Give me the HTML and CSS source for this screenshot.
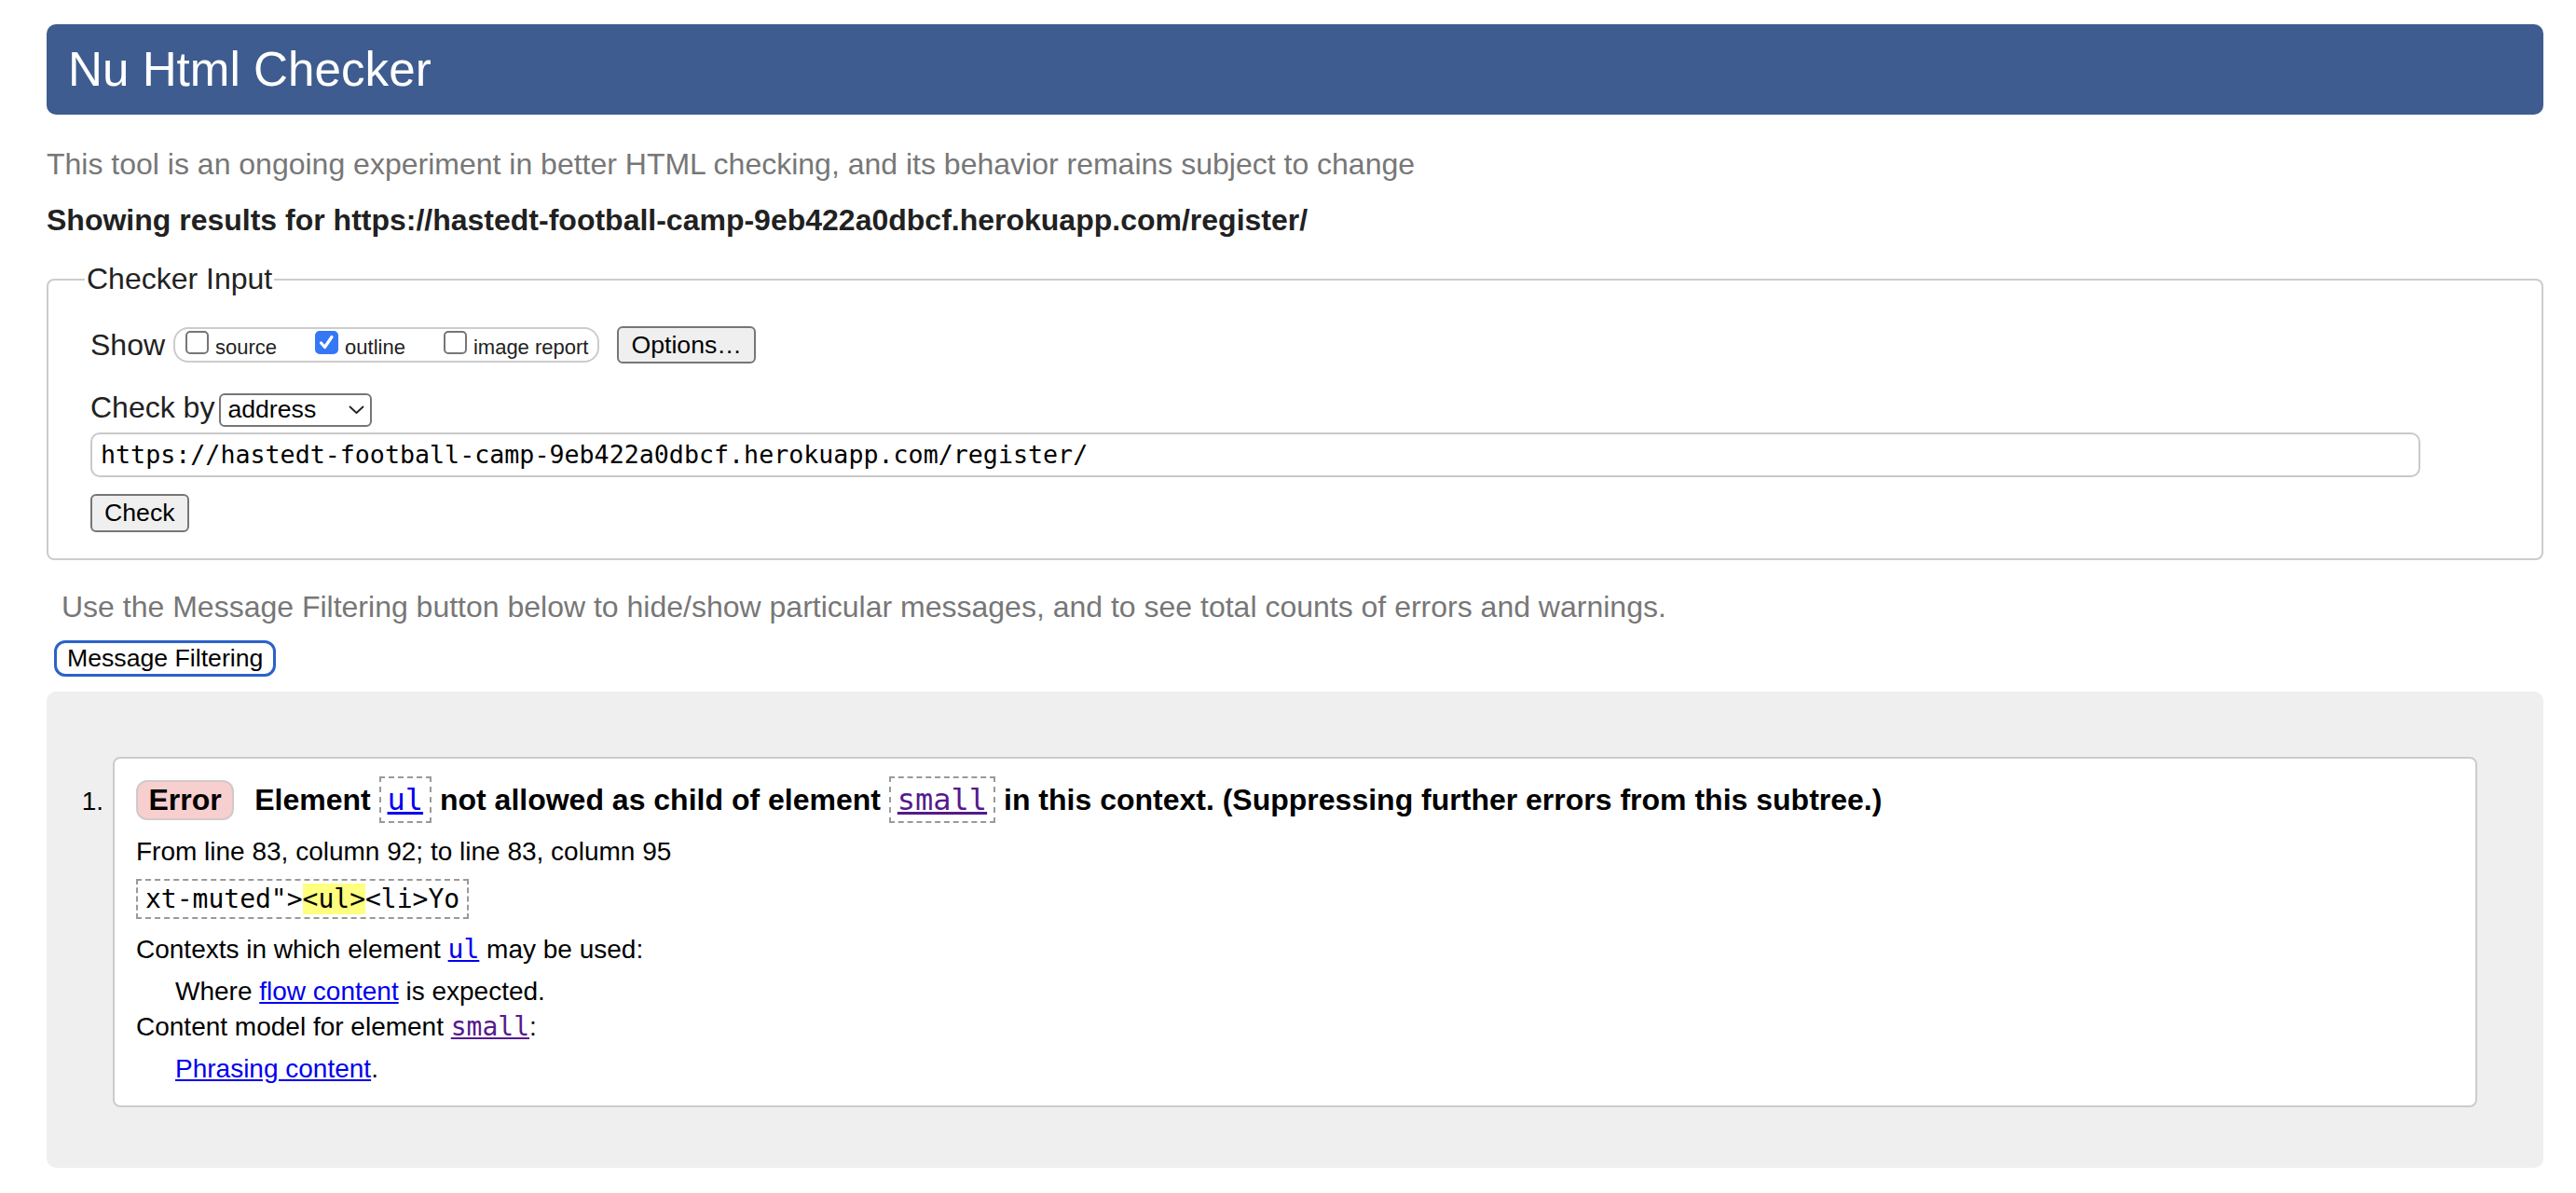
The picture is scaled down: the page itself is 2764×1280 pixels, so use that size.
FILE: index.html
```
<!DOCTYPE html>
<html lang="en">
<head>
<meta charset="utf-8">
<title>Showing results for https://hastedt-football-camp-9eb422a0dbcf.herokuapp.com/register/ - Nu Html Checker</title>
<link rel="stylesheet" href="styles.css">
</head>
<body>
<div class="page">
  <h1 class="banner">Nu Html Checker</h1>
  <p class="intro">This tool is an ongoing experiment in better HTML checking, and its behavior remains subject to change</p>
  <p class="showing">Showing results for https://hastedt-football-camp-9eb422a0dbcf.herokuapp.com/register/</p>

  <fieldset class="checker">
    <legend class="checker-legend">Checker Input</legend>
    <div class="row-show">
      <span class="row-label show-label">Show</span>
      <span class="opts">
        <label class="opt"><span class="cb"></span><span>source</span></label>
        <label class="opt"><span class="cb cb-on"><svg class="tick" width="21" height="21" viewBox="0 0 21 21"><path d="M4.5 11 L8.5 15.5 L16 4.5" fill="none" stroke="#fff" stroke-width="3.2" stroke-linecap="round" stroke-linejoin="round"/></svg></span><span>outline</span></label>
        <label class="opt"><span class="cb"></span><span>image report</span></label>
      </span>
      <button class="btn options-btn" type="button">Options…</button>
    </div>
    <div class="row-by">
      <span class="row-label">Check by</span>
      <span class="select"><span>address</span><svg class="chev" width="17" height="9" viewBox="0 0 17 9"><polyline points="1,1 8.5,8 16,1" fill="none" stroke="#222" stroke-width="1.8" stroke-linejoin="round"/></svg></span>
    </div>
    <input class="url" type="text" readonly value="https://hastedt-football-camp-9eb422a0dbcf.herokuapp.com/register/">
    <button class="btn check-btn" type="button">Check</button>
  </fieldset>

  <p class="filter-note">Use the Message Filtering button below to hide/show particular messages, and to see total counts of errors and warnings.</p>
  <button class="filter-btn" type="button">Message Filtering</button>

  <div class="results">
    <ol class="msgs">
      <li class="msg">
        <span class="num">1.</span>
        <div class="msg-box">
          <p class="msg-title"><strong class="badge">Error</strong> Element <code class="el"><a class="lnk" href="#ul">ul</a></code> not allowed as child of element <code class="el"><a class="lnk visited" href="#small">small</a></code> in this context. (Suppressing further errors from this subtree.)</p>
          <p class="loc">From line 83, column 92; to line 83, column 95</p>
          <p class="extract"><code class="extract-code">xt-muted"&gt;<mark class="hl">&lt;ul&gt;</mark>&lt;li&gt;Yo</code></p>
          <dl class="details">
            <dt>Contexts in which element <a class="lnk" href="#ul"><code class="inl">ul</code></a> may be used:</dt>
            <dd>Where <a class="lnk" href="#flow">flow content</a> is expected.</dd>
            <dt>Content model for element <a class="lnk visited" href="#small"><code class="inl">small</code></a>:</dt>
            <dd><a class="lnk" href="#phrasing">Phrasing content</a>.</dd>
          </dl>
        </div>
      </li>
    </ol>
  </div>
</div>
</body>
</html>
```
FILE: styles.css
```
html, body {
  margin: 0;
  padding: 0;
  background: #fff;
}

body {
  font-family: "Liberation Sans", Arial, Helvetica, sans-serif;
  font-size: 32px;
  color: #222;
}

.page {
  padding: 26px 35px 28px 50px;
}

.banner {
  margin: 0;
  height: 97px;
  line-height: 97px;
  padding: 0 23px;
  background: #3e5c8f;
  color: #fff;
  font-size: 51.2px;
  font-weight: normal;
  border-radius: 10px;
}

.intro {
  margin: 35px 0 0;
  line-height: 37px;
  color: #777;
}

.showing {
  margin: 23px 0 0;
  line-height: 37px;
  font-weight: bold;
  color: #212121;
}

.checker {
  margin: 26px 0 0;
  padding: 32px 130px 28px 45px;
  border: 2px solid #cccccc;
  border-radius: 8px;
  min-inline-size: 0;
}

.checker-legend {
  padding: 0 2px;
  margin-left: -6px;
  line-height: 37px;
  color: #222;
}

.row-label {
  line-height: 37px;
  color: #222;
}

.row-show {
  display: flex;
  align-items: center;
  height: 40px;
}

.show-label {
  margin-right: 9px;
}

.opts {
  display: flex;
  align-items: center;
  box-sizing: border-box;
  height: 38px;
  padding: 0 10px 0 11px;
  border: 2px solid #cccccc;
  border-radius: 16px;
  gap: 41px;
}

.opt {
  display: flex;
  align-items: flex-end;
  gap: 7px;
  font-size: 22px;
  line-height: 25px;
  color: #222;
}

.cb {
  display: flex;
  align-items: center;
  justify-content: center;
  box-sizing: border-box;
  width: 25px;
  height: 25px;
  margin-bottom: 5px;
  border: 2px solid #767676;
  border-radius: 5px;
  background: #fff;
}

.cb-on {
  background: #3478f6;
  border-color: #3478f6;
}

.tick {
  display: block;
}

.btn {
  box-sizing: border-box;
  font-family: "Liberation Sans", Arial, Helvetica, sans-serif;
  font-size: 26.67px;
  color: #000;
  background: #efefef;
  border: 2px solid #767676;
  border-radius: 6px;
  padding: 0 13px;
  margin: 0;
}

.options-btn {
  height: 40px;
  margin-left: 19px;
}

.row-by {
  display: flex;
  align-items: baseline;
  margin-top: 29px;
}

.select {
  display: inline-flex;
  align-items: center;
  justify-content: space-between;
  box-sizing: border-box;
  width: 164px;
  height: 36px;
  margin-left: 5px;
  padding: 0 6px 0 7px;
  border: 2px solid #767676;
  border-radius: 6px;
  font-size: 26.67px;
  color: #000;
  background: #fff;
}

.chev {
  display: block;
}

.url {
  display: block;
  box-sizing: border-box;
  width: 100%;
  height: 48px;
  margin: 6px 0 0;
  padding: 0 9px;
  border: 2px solid #c9c9c9;
  border-radius: 10px;
  font-family: "DejaVu Sans Mono", "Liberation Mono", monospace;
  font-size: 26.67px;
  color: #000;
  background: #fff;
  outline: none;
}

.check-btn {
  display: block;
  height: 41px;
  margin-top: 18px;
}

.filter-note {
  margin: 32px 0 0;
  padding-left: 16px;
  line-height: 37px;
  color: #777;
}

.filter-btn {
  display: block;
  box-sizing: border-box;
  height: 39px;
  margin: 17px 0 0 8px;
  padding: 0 11px;
  font-family: "Liberation Sans", Arial, Helvetica, sans-serif;
  font-size: 26.67px;
  color: #000;
  background: #fff;
  border: 3px solid #2b62c8;
  border-radius: 12px;
}

.results {
  margin-top: 16px;
  padding: 70px 71px 65px 0;
  background: #efefef;
  border-radius: 10px;
}

.msgs {
  list-style: none;
  margin: 0;
  padding: 0;
}

.msg {
  display: flex;
  align-items: baseline;
}

.num {
  flex: 0 0 71px;
  box-sizing: border-box;
  padding-right: 10px;
  text-align: right;
  font-size: 28px;
  color: #000;
}

.msg-box {
  flex: 1 1 auto;
  min-width: 0;
  padding: 23px 23px 20px 23px;
  border: 2px solid #cccccc;
  border-radius: 8px;
  background: #fff;
  color: #000;
}

.msg-title {
  margin: 0;
  font-size: 32px;
  font-weight: bold;
  line-height: 37px;
}

.badge {
  display: inline-block;
  padding: 1px 11.5px;
  margin-right: 13px;
  line-height: 37px;
  border: 2px solid #d3c9c9;
  border-radius: 12px;
  background: #f7cfcf;
}

.el {
  font-family: "DejaVu Sans Mono", "Liberation Mono", monospace;
  font-size: 32px;
  font-weight: normal;
  padding: 4px 7px;
  border: 2px dashed #9a9a9a;
}

.lnk {
  color: #0000ee;
  text-decoration: underline;
}

.lnk.visited {
  color: #551a8b;
}

.loc {
  margin: 18px 0 0;
  font-size: 28px;
  line-height: 32px;
}

.extract {
  display: flex;
  margin: 13px 0 0;
}

.extract-code {
  display: block;
  padding: 3px 8px;
  border: 2px dashed #9a9a9a;
  font-family: "DejaVu Sans Mono", "Liberation Mono", monospace;
  font-size: 28px;
  line-height: 33px;
  white-space: pre;
}

.hl {
  background: #ffff80;
  color: #000;
}

.details {
  margin: 14px 0 0;
  font-size: 28px;
  line-height: 38px;
}

.details dt {
  margin: 0;
}

.details dd {
  margin: 7px 0 0 42px;
}

.inl {
  font-family: "DejaVu Sans Mono", "Liberation Mono", monospace;
  font-size: 28px;
}
```
